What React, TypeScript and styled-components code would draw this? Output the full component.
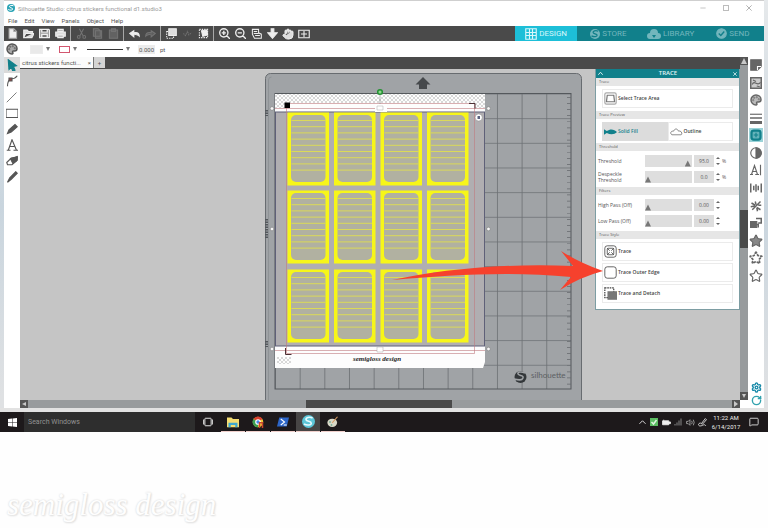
import React from "react";
import styled, { createGlobalStyle } from "styled-components";
import { Hand, Settings, RotateCw, Palette, Star, MessageSquare } from "lucide-react";

const c = {
  teal: "#11808b",
  cyan: "#1dbfd8",
  dark: "#4a4a4a",
  canvas: "#c5c5c5",
  scroll: "#989b9d",
  ink: "#555",
  yellow: "#f7f619",
};

const Global = createGlobalStyle`
  *, *::before, *::after { box-sizing: border-box; }
  body { margin: 0; background: #fefefe; font-family: Roboto, "Open Sans", sans-serif; font-size: 6px; line-height: 7px; color: ${c.ink}; }
  button, input { font: inherit; color: inherit; margin: 0; padding: 0; border: 0; background: none; min-width: 0; }
  button { display: flex; align-items: center; justify-content: center; cursor: pointer; }
  svg { display: block; flex: none; }
`;

const Page = styled.div`
  min-height: 100vh;
  overflow: hidden;
`;
const Desktop = styled.div`
  padding: 0 4px;
  background: linear-gradient(#e6e9eb, #c9d5de 50%, #dfe1e3 96%);
`;
const Window = styled.div`
  background: #fff;
  border-top: 1px solid #cfcfcf;
`;
const TitleBar = styled.header`
  display: flex;
  align-items: center;
  height: 14px;
  padding: 0 5px 0 3px;
  gap: 3px;
  color: #9a9a9a;
`;
const Title = styled.h1`
  flex: 1;
  margin: 0;
  font-size: 6px;
  font-weight: 400;
`;
const WindowButton = styled.button`
  width: 20px;
  height: 12px;
`;
const MenuBar = styled.nav`
  display: flex;
  align-items: center;
  gap: 7px;
  height: 11px;
  padding-left: 4px;
`;
const ToolBar = styled.div`
  display: flex;
  height: 15px;
  background: ${c.dark};
  color: #eee;
`;
const ToolButton = styled.button<{ $off?: boolean }>`
  width: 16px;
  height: 15px;
  opacity: ${(p) => (p.$off ? 0.25 : 1)};
`;
const Divider = styled.span`
  width: 1px;
  margin: 0 2px;
  background: #a8a8a8;
`;
const Modes = styled.nav`
  display: grid;
  grid-template-columns: repeat(4, 1fr);
  width: 249px;
  margin-left: auto;
  background: ${c.teal};
`;
const Mode = styled.button<{ $on?: boolean }>`
  gap: 2px;
  font-size: 8px;
  line-height: 9px;
  color: ${(p) => (p.$on ? "#d8f7fb" : "#73b6bd")};
  background: ${(p) => (p.$on ? c.cyan : "transparent")};
`;
const Options = styled.div`
  display: flex;
  align-items: center;
  height: 16px;
  padding-left: 2px;
`;
const Swatch = styled.button<{ $line?: boolean }>`
  width: ${(p) => (p.$line ? 11 : 13)}px;
  height: ${(p) => (p.$line ? 7 : 9)}px;
  margin-left: ${(p) => (p.$line ? 9 : 12)}px;
  border: 1px solid ${(p) => (p.$line ? "#d2566f" : "#ececec")};
  background: ${(p) => (p.$line ? "#fff" : "#e9e9e9")};
`;
const LineStyle = styled.button`
  width: 36px;
  height: 9px;
  margin-left: 10px;
`;
const Caret = styled.span`
  margin-left: 3px;
  border: 2px solid transparent;
  border-top: 4px solid #777;
  border-bottom: 0;
`;
const PointField = styled.input`
  width: 17px;
  height: 9px;
  margin: 0 5px 0 8px;
  background: #ececec;
  text-align: center;
`;
const Body = styled.div`
  display: flex;
  background: #fff;
`;
const Tools = styled.aside`
  display: flex;
  flex-direction: column;
  width: 16px;
  flex: none;
`;
const SideTool = styled.button<{ $on?: boolean }>`
  width: 16px;
  height: 16px;
  background: ${(p) => (p.$on ? "#dadada" : "transparent")};
`;
const Center = styled.main`
  flex: 1;
  min-width: 0;
`;
const Stage = styled.div`
  flex: 1;
  min-width: 0;
`;
const TabBar = styled.div`
  display: flex;
  height: 12px;
  background: ${c.dark};
`;
const Tab = styled.button`
  justify-content: space-between;
  width: 73px;
  height: 11px;
  padding: 0 2px;
  background: #fbfbfb;
`;
const AddTab = styled.button`
  width: 12px;
  height: 11px;
  background: #d4d4d4;
  border-left: 1px solid #777;
`;
const Work = styled.div`
  display: flex;
`;
const Canvas = styled.section`
  position: relative;
  padding: 4px 0 0 245px;
  background: ${c.canvas};
`;
const VScroll = styled.div`
  display: flex;
  flex-direction: column;
  justify-content: space-between;
  align-items: center;
  width: 8px;
  background: ${c.scroll};
`;
const VThumb = styled.div`
  width: 8px;
  height: 38px;
  background: ${c.dark};
`;
const ScrollButton = styled.button`
  width: 8px;
  height: 8px;
  background: #555;
`;
const HScroll = styled.div`
  display: flex;
  height: 8px;
  margin-right: 8px;
  background: ${c.scroll};
`;
const HThumb = styled.div`
  width: 146px;
  margin: 0 auto 0 278px;
  height: 8px;
  background: ${c.dark};
`;
const Panels = styled.aside`
  display: flex;
  flex-direction: column;
  align-items: center;
  justify-content: space-between;
  width: 16px;
  flex: none;
  padding: 1px 0;
`;
const PanelIcons = styled.div<{ $tall?: boolean }>`
  display: flex;
  flex-direction: column;
  justify-content: space-between;
  height: ${(p) => (p.$tall ? 225 : 26)}px;
`;
const PanelIcon = styled.button<{ $on?: boolean }>`
  width: 14px;
  height: 14px;
  color: #666;
  background: ${(p) => (p.$on ? "#9bd3d8" : "transparent")};
`;
const TracePanel = styled.section`
  position: absolute;
  top: 0;
  right: 0;
  width: 145px;
  padding-bottom: 3px;
  font-family: "Open Sans", sans-serif;
  font-size: 5px;
  background: #fff;
  border: solid #7d9da3;
  border-width: 0 1px 1px;
`;
const PanelHead = styled.header`
  display: flex;
  align-items: center;
  justify-content: space-between;
  height: 9px;
  padding: 0 2px;
  color: #e3f4f5;
  background: ${c.teal};
`;
const Heading = styled.h2`
  margin: 0;
  font-size: 6px;
  font-weight: 600;
`;
const Section = styled.h3`
  height: 8px;
  margin: 0 0 3px;
  padding: 0 3px;
  font-size: 4px;
  line-height: 8px;
  font-weight: 400;
  background: #e6e6e6;
`;
const Stack = styled.div`
  display: flex;
  flex-direction: column;
  gap: 2px;
  padding: 0 6px;
  margin-bottom: 3px;
`;
const Action = styled.button`
  justify-content: flex-start;
  gap: 1px;
  height: 19px;
  padding-left: 1px;
  border: 1px solid #ebebeb;
  font-weight: 600;
  color: #444;
`;
const Pair = styled.div`
  display: grid;
  grid-template-columns: 1fr 1fr;
  height: 19px;
  margin: 0 6px 2px;
`;
const Choice = styled.button<{ $on?: boolean }>`
  justify-content: flex-start;
  gap: 1px;
  padding-left: 1px;
  border: 1px solid ${(p) => (p.$on ? "#dcdcdc" : "#ebebeb")};
  font-weight: 600;
  color: ${(p) => (p.$on ? c.teal : "#444")};
  background: ${(p) => (p.$on ? "#dcdcdc" : "#fff")};
`;
const Fields = styled.div`
  display: grid;
  gap: 3px;
  padding: 0 2px;
  margin-bottom: 4px;
`;
const Field = styled.div`
  display: grid;
  grid-template-columns: 45px 47px 20px 4px 8px;
  column-gap: 2px;
  align-items: center;
  height: 13px;
  line-height: 6px;
`;
const Slider = styled.input`
  appearance: none;
  width: 47px;
  height: 12px;
  background: #dedede;
  &::-webkit-slider-thumb {
    appearance: none;
    width: 6px;
    height: 12px;
    background: #777;
    clip-path: polygon(50% 50%, 100% 100%, 0 100%);
  }
`;
const ValueField = styled.input`
  width: 20px;
  height: 12px;
  text-align: center;
  background: #dedede;
`;
const Spinner = styled.button`
  width: 4px;
  height: 10px;
`;
const Callout = styled.svg`
  position: absolute;
  left: 372px;
  top: 181px;
  pointer-events: none;
`;
const WindowFoot = styled.div`
  height: 4px;
  margin: 0 -4px;
  background: #e2e2e2;
`;
const TaskBar = styled.footer`
  display: flex;
  align-items: center;
  height: 20px;
  background: #1d191b;
  color: #eee;
`;
const Start = styled.button`
  width: 24px;
  height: 20px;
`;
const Search = styled.input`
  width: 171px;
  height: 20px;
  padding-left: 4px;
  margin-right: 1px;
  font-size: 7px;
  background: #2e2e2e;
  &::placeholder { color: #929292; opacity: 1; }
`;
const Apps = styled.div`
  display: flex;
  gap: 1px;
`;
const App24 = styled.button<{ $run?: boolean; $on?: boolean }>`
  width: 24px;
  height: 20px;
  border-bottom: 1px solid ${(p) => (p.$run ? "#f0cfcb" : "transparent")};
  background: ${(p) => (p.$on ? "#474545" : "transparent")};
`;
const Tray = styled.div`
  display: flex;
  align-items: center;
  margin-left: auto;
`;
const TrayButton = styled.button`
  width: 12px;
  height: 20px;
`;
const Clock = styled.time`
  display: grid;
  justify-items: center;
  width: 36px;
  font-size: 6px;
  line-height: 9px;
`;
const Notify = styled.button`
  width: 24px;
  height: 20px;
  padding-right: 4px;
`;
const Signature = styled.p`
  margin: 55px 7px 0;
  font-family: "Liberation Serif", serif;
  font-size: 31px;
  line-height: 36px;
  font-style: italic;
  font-weight: 400;
  color: #fefefe;
  text-shadow: 0 0 2px #d4d4d4, 1px 1px 2px #e2e2e2;
`;

type GlyphProps = { size?: number; children: React.ReactNode };
const Glyph = ({ size = 12, children }: GlyphProps) => (
  <svg width={size} height={size} viewBox="0 0 16 16" fill="none" stroke="currentColor" strokeWidth="1.5" aria-hidden="true">
    {children}
  </svg>
);

const SMark = ({ size = 10, disc = "currentColor", line = "#11808b" }) => (
  <svg width={size} height={size} viewBox="0 0 16 16" aria-hidden="true">
    <circle cx="8" cy="8" r="8" fill={disc} />
    <path d="M13 3.6C9 1.8 4.4 3.2 5 5.8c.5 2.3 6.4 1.6 6.4 4.2 0 2.4-4.8 3.2-9 1" fill="none" stroke={line} strokeWidth="2" />
  </svg>
);

const tools: Record<string, React.ReactNode> = {
  New: <path d="M3 1h7l4 4v10H3zM10 1v4h4" fill="#eee" stroke="#aaa" />,
  Open: <path d="M1 14V3h5l2 2h6v3H4l-3 6h12l3-6h-2" fill="#ddd" />,
  Save: <path d="M1 2h13l1 1v11H1zM4 2v4h8V2M4 14V9h8v5" fill="#777" strokeWidth="2" />,
  Print: (
    <>
      <path d="M1 6h14v6H1z" fill="#ddd" />
      <path d="M4 2h8v3H4zM4 10h8v4H4z" fill="#bbb" />
    </>
  ),
  Cut: <path d="M5 1l5 10M11 1L6 11M4 11a2 2 0 100 4 2 2 0 000-4M12 11a2 2 0 100 4 2 2 0 000-4" />,
  Copy: <path d="M2 1h7l3 3v8H2zM5 4h9v11H5z" fill="#999" />,
  Paste: <path d="M2 3h12v12H2zM5 1h6v4H5z" fill="#aaa" />,
  Undo: <path d="M1 8l6-4v3c5-1 8 0 8 5-2-2-5-3-8-2v3z" fill="#eee" />,
  Redo: <path d="M15 8L9 4v3C4 6 1 7 1 12c2-2 5-3 8-2v3z" fill="#999" />,
  "Select all": (
    <>
      <path d="M1 5h10v10H1z" strokeDasharray="2 1.5" />
      <path d="M4 1h11v10H4z" fill="#ddd" />
    </>
  ),
  Deselect: <path d="M2 8l3 3 3-6 2 5 4-3" strokeDasharray="2 1" />,
  "Select by color": (
    <>
      <path d="M2 2h12v12H2z" strokeDasharray="2 1.5" />
      <path d="M5 4l8-1 1 7-7 2z" fill="#eee" />
    </>
  ),
  "Zoom in": <path d="M7 1a6 6 0 100 12A6 6 0 007 1M11 11l5 5M7 4v6M4 7h6" strokeWidth="2" />,
  "Zoom out": <path d="M7 1a6 6 0 100 12A6 6 0 007 1M11 11l5 5M4 7h6" strokeWidth="2" />,
  "Zoom selection": <path d="M2 2h9v5l4 2v6H5L2 9zM4 5h5M4 8h7M6 11h7" strokeWidth="1.5" />,
  "Drag zoom": <path d="M6 1h4v6h5l-7 8-7-8h5z" fill="#eee" />,
};

const off = ["Cut", "Copy", "Paste", "Redo", "Deselect"];
const Tool = ({ name }: { name: string }) => (
  <ToolButton aria-label={name} $off={off.includes(name)}>
    <Glyph size={11}>{tools[name]}</Glyph>
  </ToolButton>
);

const sideTools: [string, React.ReactNode][] = [
  ["Select", <path key="a" d="M3 1l11 8-4 1 2 5-3 1-2-5-3 3z" fill={c.teal} stroke={c.teal} />],
  ["Edit points", <React.Fragment key="b"><path d="M2 15c0-6 2-9 5-10 4 0 6-1 8-4" /><path d="M4 4h4v4H4z" fill="#944" /></React.Fragment>],
  ["Line", <path key="c" d="M1 15L14 2" strokeWidth="1" />],
  ["Rectangle", <path key="d" d="M0 3h16v11H0z" />],
  ["Pencil", <path key="e" d="M2 14l2-5 8-7 3 3-8 7zM3 12l2 1" fill="#555" />],
  ["Text", <path key="f" d="M1 15h5M10 15h6M3 15L8 1l6 14M5 10h6" />],
  ["Eraser", <React.Fragment key="g"><path d="M1 10l6-6 8-1-1 5-6 5H2z" /><path d="M6 5l9-3v5l-6 4z" fill="#555" /></React.Fragment>],
  ["Knife", <path key="h" d="M2 15l3-6 8-8 2 2-8 8z" fill="#555" />],
];

const panelIcons: [string, React.ReactNode][] = [
  ["Page setup", <Glyph key="1"><path d="M1 1h14v9l-5 5H1z" fill="#666" /><path d="M10 15v-5h5" stroke="#fff" /></Glyph>],
  ["Fill pattern", <Glyph key="2"><path d="M1 1h14v14H1z" fill="#ccc" strokeWidth="2" /><path d="M3 10c3-7 7 4 11-3M4 4l4 2M9 12l4 1" /></Glyph>],
  ["Color", <Palette key="3" size={12} fill="#bbb" strokeWidth={3} />],
  ["Line style", <Glyph key="4"><path d="M0 3h16" /><path d="M0 8h16" strokeWidth="2" /><path d="M0 14h16" strokeWidth="4" /></Glyph>],
  ["Trace", <Glyph key="5"><rect x="2" y="2" width="12" height="12" rx="3" stroke={c.teal} strokeWidth="3" fill="#63b3ba" /><path d="M5 8h6M8 5v6" stroke={c.teal} /></Glyph>],
  ["Contrast", <Glyph key="6"><circle cx="8" cy="8" r="7" /><path d="M8 1a7 7 0 010 14z" fill="#666" /></Glyph>],
  ["Text style", <Glyph key="7"><path d="M0 14h4M7 14h5M2 14L6 2l4 12M3 10h6M14 1v14" /></Glyph>],
  ["Align", <Glyph key="8"><path d="M1 2v12M15 2v12" strokeWidth="2" /><path d="M5 5v6M11 5v6M8 3v10" strokeWidth="2" /></Glyph>],
  ["Transform", <Glyph key="9"><path d="M3 13L14 2M2 4l5 3M9 10l5 3M7 2l1 4M9 10l1 5M1 9l5-1M11 7h4" strokeWidth="2" /></Glyph>],
  ["Replicate", <Glyph key="10"><path d="M0 6h9v8H0z" fill="#666" /><path d="M8 2h7v6h-4M6 10h5v4" strokeWidth="2" /></Glyph>],
  ["Modify", <Star key="11" size={14} fill="#888" strokeWidth={2} />],
  ["Rhinestones", <Star key="12" size={14} strokeWidth={3} strokeDasharray="2 4" />],
  ["Sketch", <Star key="13" size={14} strokeWidth={2} />],
];

const columns = [0, 1, 2, 3];
const Mat = () => (
  <svg width="317" height="327" viewBox="265 73 317 327" role="img" aria-label="Cutting mat">
    <defs>
      <pattern id="hatch" width="4" height="4" patternUnits="userSpaceOnUse">
        <path d="M0 0l4 4M4 0L0 4" stroke="#d8d8d8" strokeWidth="1" />
      </pattern>
      <pattern id="grid" x="275" y="93.5" width="24.66" height="24.66" patternUnits="userSpaceOnUse">
        <path d="M0 0h24.66M0 0v24.66" stroke="#6b6f73" strokeWidth="1.6" fill="none" />
      </pattern>
    </defs>
    <rect x="265.5" y="73.5" width="316" height="340" rx="5" fill="#a0a3a6" stroke="#686c70" />
    <path d="M268.5 400V80q0-3 3-3" fill="none" stroke="#8f9396" />
    <rect x="275" y="93.5" width="296" height="295.5" fill="url(#grid)" stroke="#54585c" />
    <path d="M569 97V388" stroke="#666a6e" strokeWidth="4" strokeDasharray=".7 5.4" />
    <path d="M423 77l7.500 7.500h-3.500v4.500h-8v-4.500h-3.500z" fill="#46494c" />
    <path d="M275 94h210v18H275zM275 346h210v16l-2 6H275z" fill="#fdfdfd" />
    <path d="M275 94h210v14h-10v-5H285v5h-10zM277 357h14v7h-14z" fill="url(#hatch)" />
    <rect x="275.500" y="112" width="209" height="234" fill="#b0aeb1" stroke="#5f6078" />
    <path d="M286.500 103.500h188v250h-188zM275 108.500h210M275 350.500h210" fill="none" stroke="#c07b80" strokeWidth=".6" />
    {[112, 190, 269].map((y) =>
      columns.map((i) => {
        const x = 287.5 + i * 46.5;
        return (
          <g key={`${y}-${i}`}>
            <rect x={x} y={y + 0.5} width="41.500" height="73" fill={c.yellow} />
            <rect x={x + 3.5} y={y + 3} width="34.500" height="67" rx="5" fill="#b1b1a1" />
            {[0, 1, 2, 3, 4, 5, 6, 7, 8].map((n) => (
              <path key={n} d={`M${x + 4} ${y + 8.5 + n * 6.2}h34`} stroke="#e0df50" strokeWidth=".9" />
            ))}
          </g>
        );
      }),
    )}
    <path d="M284.500 102.500h5.500v5.500h-5.500z" fill="#000" />
    <path d="M469 103.500h6v5M285.500 348v6.500h6" fill="none" stroke="#4d3034" />
    <circle cx="380" cy="92" r="2.300" fill="#8ed88c" stroke="#249233" strokeWidth="1.500" />
    <path d="M380 97v7" stroke="#888" strokeWidth=".6" />
    <path d="M375 104h12v8h-12z" fill="#fff" />
    <path d="M377 106h6v4h-6zM377 347h6v5h-6z" fill="#fff" stroke="#aaa" strokeWidth=".5" />
    {[108.5, 229, 349].map((y) => (
      <g key={y} fill="#f6f6f6" stroke="#777" strokeWidth=".5">
        <circle cx="272" cy={y} r="1.800" />
        <circle cx="488.500" cy={y} r="1.800" />
      </g>
    ))}
    <circle cx="478.700" cy="117.500" r="3.600" fill="#fff" stroke="#888" strokeWidth=".5" />
    <path d="M477.500 116h2.500v3h-2.500z" fill="#5b6380" />
    <path d="M266.500 110v6M266.500 219v19M266.500 341v6" stroke="#54585c" strokeWidth="3" strokeDasharray="1.500 1" />
    <text x="353" y="361" fontFamily="Liberation Serif, serif" fontSize="7" fontWeight="700" fontStyle="italic" fill="#1c1c1c">semigloss design</text>
    <circle cx="520.500" cy="377" r="6" fill="#33373a" />
    <path d="M525 373c-4-2-8-1-7 1s6 1 5 4-5 2-9 1" fill="none" stroke="#a0a3a6" strokeWidth="1.500" />
    <text x="531" y="378" fontFamily="Lato, sans-serif" fontSize="8" fill="#5c6064">silhouette</text>
  </svg>
);

type SettingProps = { id: string; label: string; value: string; at: number; unit?: string };
const Setting = ({ id, label, value, at, unit }: SettingProps) => (
  <Field>
    <label htmlFor={id}>{label}</label>
    <Slider type="range" id={id} defaultValue={at} />
    <ValueField aria-label={`${label} value`} defaultValue={value} />
    <Spinner aria-label={`Step ${label}`}>
      <svg width="4" height="10" viewBox="0 0 4 10"><path d="M0 3l2-2 2 2zM0 7l2 2 2-2z" fill="#666" /></svg>
    </Spinner>
    <span>{unit}</span>
  </Field>
);

const Arrow = ({ d }: { d: string }) => (
  <svg width="6" height="6" viewBox="0 0 6 6"><path d={d} fill="#c8c8c8" /></svg>
);

export default function App() {
  return (
    <Page>
      <Global />
      <Desktop>
        <Window>
          <TitleBar>
            <SMark size={8} disc="#28a3b5" line="#fff" />
            <Title>Silhouette Studio: citrus stickers functional d1.studio3</Title>
            <WindowButton aria-label="Minimize"><Glyph size={6}><path d="M1 8h14" /></Glyph></WindowButton>
            <WindowButton aria-label="Maximize"><Glyph size={6}><path d="M1 1h14v14H1z" strokeWidth="2" /></Glyph></WindowButton>
            <WindowButton aria-label="Close"><Glyph size={6}><path d="M1 1l14 14M15 1L1 15" strokeWidth="2" /></Glyph></WindowButton>
          </TitleBar>
          <MenuBar>
            {["File", "Edit", "View", "Panels", "Object", "Help"].map((m) => <button key={m}>{m}</button>)}
          </MenuBar>
          <ToolBar>
            {["New", "Open", "Save", "Print"].map((n) => <Tool key={n} name={n} />)}
            <Divider />
            {["Cut", "Copy", "Paste"].map((n) => <Tool key={n} name={n} />)}
            <Divider />
            {["Undo", "Redo"].map((n) => <Tool key={n} name={n} />)}
            <Divider />
            {["Select all", "Deselect", "Select by color"].map((n) => <Tool key={n} name={n} />)}
            <Divider />
            {["Zoom in", "Zoom out", "Zoom selection", "Drag zoom"].map((n) => <Tool key={n} name={n} />)}
            <ToolButton aria-label="Pan"><Hand size={12} fill="#ddd" /></ToolButton>
            <ToolButton aria-label="Fit to window"><Glyph><path d="M1 3h14v10H1zM8 4v8M4 8h8" /></Glyph></ToolButton>
            <Modes>
              <Mode $on><Glyph><path d="M1 1h14v14H1zM1 6h14M1 10h14M6 1v14M10 1v14" /></Glyph>DESIGN</Mode>
              <Mode><SMark />STORE</Mode>
              <Mode>
                <svg width="14" height="10" viewBox="0 0 14 10"><path d="M3 10a3 3 0 010-6 4 4 0 018 0 3 3 0 010 6z" fill="currentColor" /><path d="M7 3v3H5l2 3 2-3H7" fill={c.teal} /></svg>
                LIBRARY
              </Mode>
              <Mode><Glyph size={11}><circle cx="8" cy="8" r="7" fill="currentColor" /><path d="M4 8l3 3 5-6" stroke={c.teal} strokeWidth="2" /></Glyph>SEND</Mode>
            </Modes>
          </ToolBar>
          <Options>
            <Palette size={12} fill="#aaa" strokeWidth={3} />
            <Swatch aria-label="Fill color" /><Caret />
            <Swatch aria-label="Line color" $line /><Caret />
            <LineStyle aria-label="Line style">
              <svg width="36" height="1"><path d="M0 .5h36" stroke="#333" /></svg>
            </LineStyle>
            <Caret />
            <PointField id="weight" defaultValue="0.000" />
            <label htmlFor="weight">pt</label>
          </Options>
          <Body>
            <Tools>
              {sideTools.map(([name, art], i) => (
                <SideTool key={name} aria-label={name} $on={i === 0}><Glyph>{art}</Glyph></SideTool>
              ))}
            </Tools>
            <Center>
              <Work>
                <Stage>
                  <TabBar>
                    <Tab><span>citrus stickers functi...</span><span>×</span></Tab>
                    <AddTab aria-label="New tab">+</AddTab>
                  </TabBar>
                  <Canvas>
                    <Mat />
                    <TracePanel>
                      <PanelHead>
                        <Glyph size={5}><path d="M1 12l7-8 7 8" strokeWidth="3" /></Glyph>
                        <Heading>TRACE</Heading>
                        <Glyph size={4}><path d="M1 1l14 14M15 1L1 15" strokeWidth="3" /></Glyph>
                      </PanelHead>
                      <Section>Trace</Section>
                      <Stack>
                        <Action>
                          <Glyph size={13}><rect x="1" y="1" width="14" height="14" rx="2" stroke="#aaa" /><path d="M4 4h8l1 8H3z" stroke="#777" /></Glyph>
                          Select Trace Area
                        </Action>
                      </Stack>
                      <Section>Trace Preview</Section>
                      <Pair>
                        <Choice $on>
                          <svg width="13" height="6" viewBox="0 0 14 6"><path d="M0 0l3 2c4-3 8-2 11 1-3 3-7 3-11 1L0 6z" fill={c.teal} /></svg>
                          Solid Fill
                        </Choice>
                        <Choice>
                          <svg width="13" height="8" viewBox="0 0 14 8"><path d="M1 6c-1-3 2-3 3-3 1-3 4-3 5 0 3-1 5 3 3 4H2z" fill="none" stroke="#666" strokeWidth=".8" /></svg>
                          Outline
                        </Choice>
                      </Pair>
                      <Section>Threshold</Section>
                      <Fields>
                        <Setting id="threshold" label="Threshold" value="95.0" at={97} unit="%" />
                        <Setting id="despeckle" label="Despeckle Threshold" value="0.0" at={0} unit="%" />
                      </Fields>
                      <Section>Filters</Section>
                      <Fields>
                        <Setting id="high" label="High Pass (Off)" value="0.00" at={0} />
                        <Setting id="low" label="Low Pass (Off)" value="0.00" at={0} />
                      </Fields>
                      <Section>Trace Style</Section>
                      <Stack>
                        <Action>
                          <Glyph size={13}><rect x="1" y="1" width="14" height="14" rx="3" strokeWidth="1" /><rect x="4" y="4" width="8" height="8" rx="1" strokeWidth="1" /><path d="M4 4l3 3M12 4L9 7M4 12l3-3M12 12L9 9" strokeWidth="1" /></Glyph>
                          Trace
                        </Action>
                        <Action>
                          <Glyph size={13}><rect x="1" y="1" width="14" height="14" rx="3" strokeWidth="1" /></Glyph>
                          Trace Outer Edge
                        </Action>
                        <Action>
                          <Glyph size={13}><path d="M1 1h11v12H1z" strokeDasharray="2 1" /><path d="M5 6h11v9H5z" fill="#777" stroke="#777" /></Glyph>
                          Trace and Detach
                        </Action>
                      </Stack>
                    </TracePanel>
                    <Callout width="212" height="42" viewBox="392 250 212 42" aria-hidden="true">
                      <path d="M392 280C440 270 500 263 573 266L561 251Q580 263 603 271Q580 277 560 290L571 277C510 271 450 275 392 280Z" fill="#f6412d" />
                    </Callout>
                  </Canvas>
                </Stage>
                <VScroll>
                  <ScrollButton aria-label="Scroll up"><Arrow d="M3 0l3 6H0z" /></ScrollButton>
                  <VThumb />
                  <ScrollButton aria-label="Scroll down"><Arrow d="M1 1l2 4 2-4z" /></ScrollButton>
                </VScroll>
              </Work>
              <HScroll>
                <ScrollButton aria-label="Scroll left"><Arrow d="M5 1v4L1 3z" /></ScrollButton>
                <HThumb />
                <ScrollButton aria-label="Scroll right"><Arrow d="M1 0v6l4-3z" /></ScrollButton>
              </HScroll>
            </Center>
            <Panels>
              <PanelIcons $tall>
                {panelIcons.map(([name, icon]) => (
                  <PanelIcon key={name} aria-label={name} $on={name === "Trace"}>{icon}</PanelIcon>
                ))}
              </PanelIcons>
              <PanelIcons>
                <PanelIcon aria-label="Preferences"><Settings size={11} color="#1789a8" strokeWidth={3} /></PanelIcon>
                <PanelIcon aria-label="Sync"><RotateCw size={11} color="#31a2ae" strokeWidth={3} /></PanelIcon>
              </PanelIcons>
            </Panels>
          </Body>
          <WindowFoot />
        </Window>
      </Desktop>
      <TaskBar>
        <Start aria-label="Start">
          <svg width="9" height="9" viewBox="0 0 9 9"><path d="M0 1l4-.5V4H0zM4.500 .5L9 0v4H4.500zM0 4.500h4v4L0 8zM4.500 4.500H9V9l-4.500-.5z" fill="#fff" /></svg>
        </Start>
        <Search aria-label="Search Windows" placeholder="Search Windows" />
        <Apps>
          <App24 aria-label="Task view"><Glyph size={10}><rect x="3" y="2" width="10" height="12" rx="1" /><path d="M1 4v8M15 4v8" /></Glyph></App24>
          <App24 $run aria-label="File Explorer">
            <Glyph><path d="M0 2h6l2 2h8v11H0z" fill="#f5dd72" stroke="none" /><path d="M2 15V9h12v6h-3v-3H5v3z" fill="#3fa8cf" stroke="none" /></Glyph>
          </App24>
          <App24 $run aria-label="Chrome">
            <Glyph>
              <circle cx="8" cy="8" r="7" fill="#f2c834" stroke="none" />
              <path d="M8 8L2 4a7 7 0 0112 0z" fill="#d8402f" stroke="none" />
              <path d="M8 8L2 4a7 7 0 006 11z" fill="#3d9e51" stroke="none" />
              <circle cx="8" cy="8" r="3" fill="#4688e8" stroke="#fff" />
              <path d="M10 16V9h4v7" stroke="#c8452e" strokeWidth="2" />
            </Glyph>
          </App24>
          <App24 $run aria-label="PowerShell">
            <Glyph><path d="M3 2h13l-3 12H0z" fill="#2d66c9" stroke="none" /><path d="M5 4l5 4-5 4M9 12h4" stroke="#fff" /></Glyph>
          </App24>
          <App24 $run $on aria-label="Silhouette Studio"><SMark size={13} disc="#5cc6d8" line="#e8fbff" /></App24>
          <App24 $run aria-label="Paint">
            <Glyph><ellipse cx="7" cy="9" rx="6.500" ry="5.500" fill="#d9d8c8" stroke="none" /><path d="M7 9l7-8" stroke="#d79a60" /><path d="M3 8h2M5 12h2" stroke="#65a58c" strokeWidth="2" /></Glyph>
          </App24>
        </Apps>
        <Tray>
          <TrayButton aria-label="Show hidden icons"><Glyph size={7}><path d="M1 11l7-7 7 7" strokeWidth="2" /></Glyph></TrayButton>
          <TrayButton aria-label="Sync status"><Glyph size={8}><rect width="16" height="16" fill="#5cbd63" stroke="none" /><path d="M3 8l4 4 6-8" stroke="#dff5e0" strokeWidth="3" /></Glyph></TrayButton>
          <TrayButton aria-label="Battery"><Glyph size={9}><path d="M1 5h11v7H1zM12 7h3v3h-3zM3 3v2" fill="#eee" /></Glyph></TrayButton>
          <TrayButton aria-label="Network"><Glyph size={8}><path d="M2 15v-3M6 15V9M10 15V5M14 15V1" stroke="#888" strokeWidth="2" /></Glyph></TrayButton>
          <TrayButton aria-label="Volume"><Glyph size={9}><path d="M1 6h3l3-3v10l-3-3H1zM10 5q2 3 0 6M13 3q3 5 0 10" stroke="#aaa" /></Glyph></TrayButton>
          <TrayButton aria-label="Ink workspace"><Glyph size={9}><path d="M6 10l7-9 2 2-7 8zM5 9c-6 0-5 6 0 5s6-4 9 0" /></Glyph></TrayButton>
          <Clock><span>11:22 AM</span><span>6/14/2017</span></Clock>
          <Notify aria-label="Notifications"><MessageSquare size={10} strokeWidth={2} /></Notify>
        </Tray>
      </TaskBar>
      <Signature>semigloss design</Signature>
    </Page>
  );
}
